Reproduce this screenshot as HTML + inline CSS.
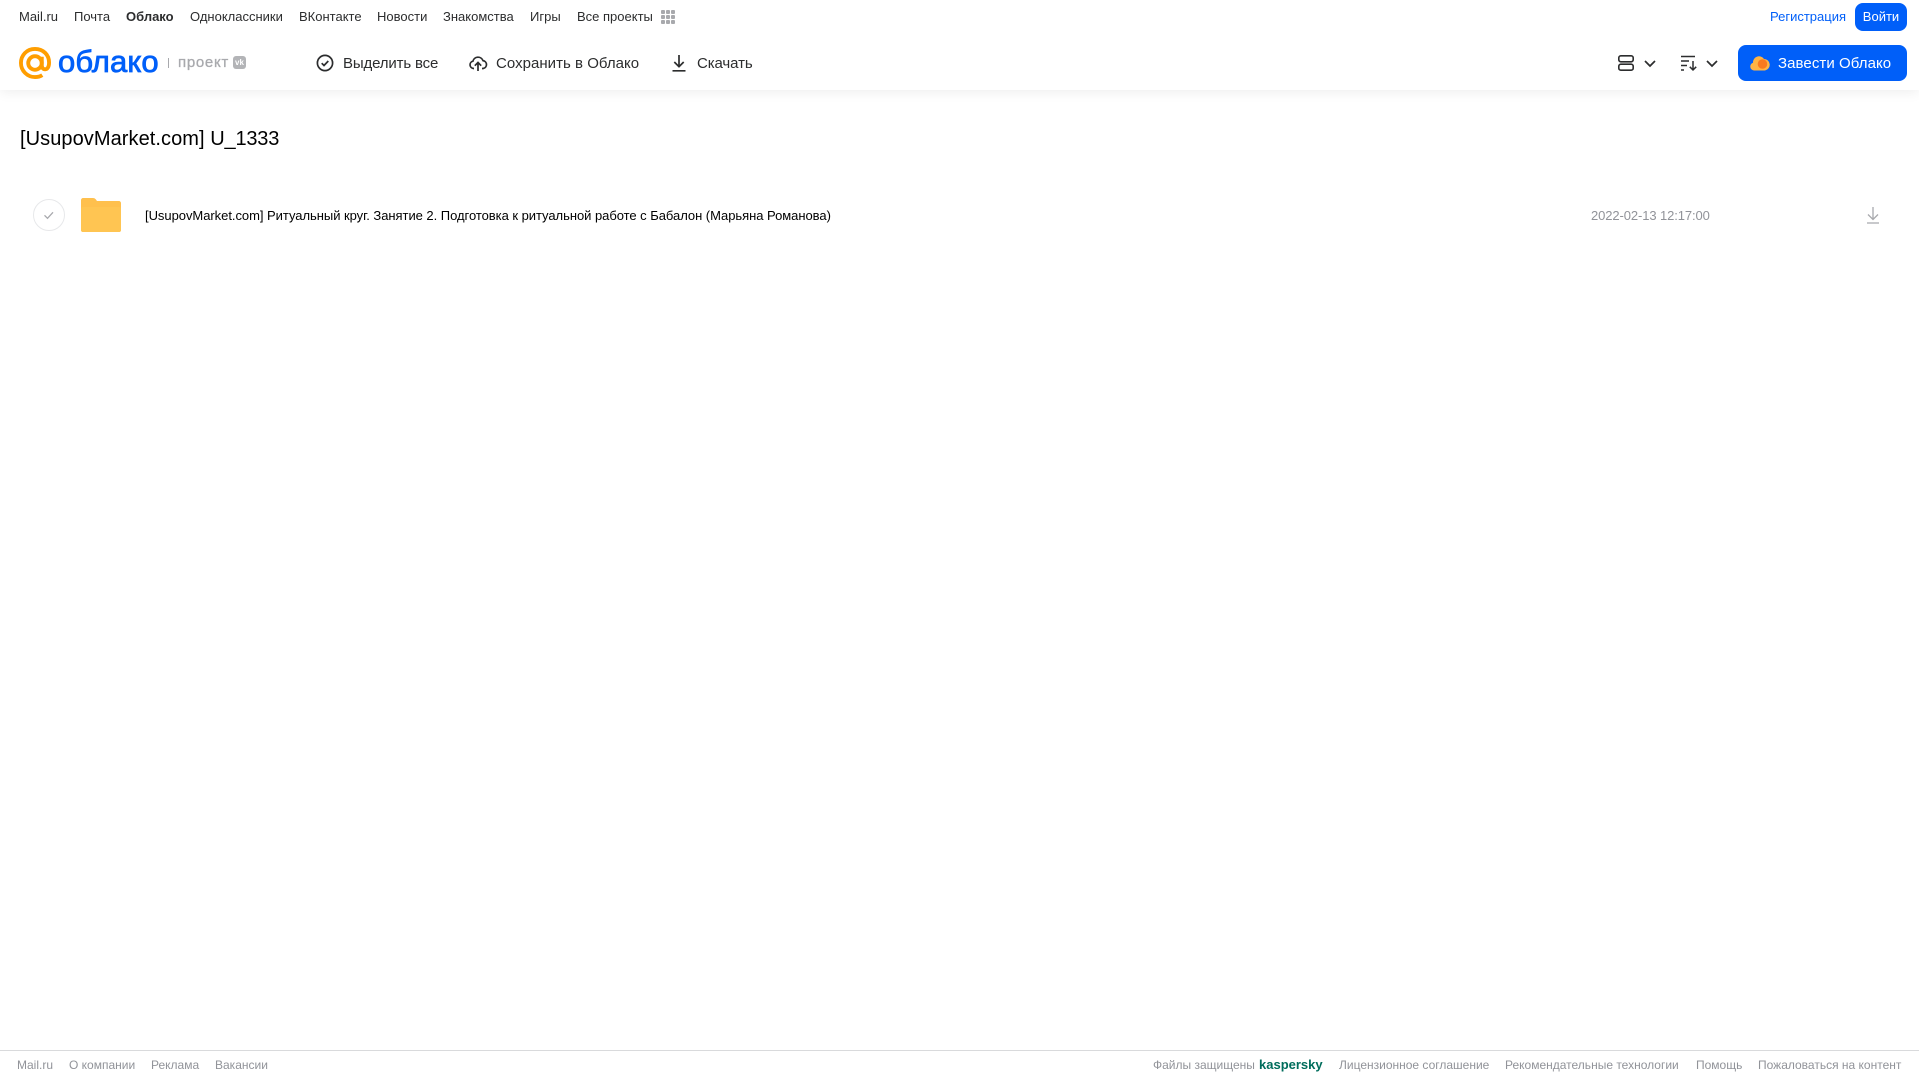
<!DOCTYPE html>
<html lang="ru"><head><meta charset="utf-8"><title>Облако</title>
<style>
html,body{margin:0;padding:0;background:#fff}
body{width:1919px;height:1079px;position:relative;overflow:hidden;font-family:"Liberation Sans",Arial,sans-serif}
.t{position:absolute;white-space:nowrap;line-height:20px;height:20px}
.n{top:7px;font-size:13px;color:#2c2d2e}
.b{top:53.500px;font-size:15px;color:#2c2d2e}
.f{top:1055px;font-size:12px;color:#919399}
svg{position:absolute;overflow:visible}
</style></head><body>
<div style="position:absolute;left:0;top:0;width:1919px;height:90px;background:#fff;box-shadow:0 2px 12px rgba(0,0,0,.07)"></div>

<span class="t n" style="left:19px">Mail.ru</span>
<span class="t n" style="left:74px">Почта</span>
<span class="t n" style="left:126px;font-weight:bold">Облако</span>
<span class="t n" style="left:190px">Одноклассники</span>
<span class="t n" style="left:299px">ВКонтакте</span>
<span class="t n" style="left:377px">Новости</span>
<span class="t n" style="left:443px">Знакомства</span>
<span class="t n" style="left:530px">Игры</span>
<span class="t n" style="left:577px">Все проекты</span>
<svg style="left:661px;top:10px" width="14" height="14" fill="#a8a9ad"><rect width="4" height="4" rx="1"/><rect x="5" width="4" height="4" rx="1"/><rect x="10" width="4" height="4" rx="1"/><rect y="5" width="4" height="4" rx="1"/><rect x="5" y="5" width="4" height="4" rx="1"/><rect x="10" y="5" width="4" height="4" rx="1"/><rect y="10" width="4" height="4" rx="1"/><rect x="5" y="10" width="4" height="4" rx="1"/><rect x="10" y="10" width="4" height="4" rx="1"/></svg>

<span class="t n" style="left:1770px;color:#005ff9">Регистрация</span>
<div style="position:absolute;left:1855px;top:3px;width:52px;height:28px;border-radius:8px;background:#005ff9;color:#fff;font-size:13px;line-height:27px;text-align:center">Войти</div>

<svg style="left:19px;top:47px" width="32" height="32" viewBox="0 0 33 33" fill="none" stroke="#ff9e00" stroke-width="4"><circle cx="16.500" cy="16.500" r="7"/><path d="M23.500 10v8.500c0 3 1.500 4.500 3.500 4.500s4-2 4-7C31 8 25 2 16.500 2S2 8.500 2 16.500 8.500 31 16.500 31c3 0 5.500-.7 7.500-2"/></svg>
<span class="t" style="left:58px;top:44px;height:36px;line-height:36px;font-size:31px;font-weight:normal;-webkit-text-stroke:.8px #005ff9;color:#005ff9;letter-spacing:.1px">облако</span>
<div style="position:absolute;left:168px;top:58px;width:1px;height:10px;background:#a8a9ad"></div>
<span class="t" style="left:178px;top:53px;font-size:15px;-webkit-text-stroke:.3px #a8a9ad;color:#a8a9ad;letter-spacing:.7px">проект</span>
<div style="position:absolute;left:233px;top:56px;width:13px;height:13px;border-radius:3px;background:#b3b4b7;color:#fff;font-size:8px;font-weight:bold;line-height:13px;text-align:center">vk</div>

<svg style="left:316px;top:54px" width="18" height="18" viewBox="0 0 18 18" fill="none" stroke="#2c2d2e" stroke-width="1.700"><circle cx="9" cy="9" r="7.600"/><path d="M5.700 9.200l2.300 2.300 4.300-4.500"/></svg>
<span class="t b" style="left:343px;letter-spacing:-.15px">Выделить все</span>
<svg style="left:469px;top:54px" width="18" height="18" viewBox="0 0 18 18" fill="none" stroke="#2c2d2e" stroke-width="1.700"><path d="M5 14.500H4.500a3.700 3.700 0 0 1-.6-7.300A5.300 5.300 0 0 1 14 6.600a4 4 0 0 1 .2 7.900H13"/><path d="M9 17V9M5.800 11.700L9 8.500l3.200 3.200"/></svg>
<span class="t b" style="left:496px;letter-spacing:.03px">Сохранить в Облако</span>
<svg style="left:670px;top:54px" width="18" height="18" viewBox="0 0 18 18" fill="none" stroke="#2c2d2e" stroke-width="1.700"><path d="M9 1v11.500M4.300 8L9 12.700 13.700 8M2.500 16.800h13"/></svg>
<span class="t b" style="left:697px;letter-spacing:-.1px">Скачать</span>

<svg style="left:1618px;top:55px" width="16" height="16" viewBox="0 0 16 16" fill="none" stroke="#2c2d2e" stroke-width="1.600"><rect x=".8" y=".8" width="14.400" height="6" rx="2"/><rect x=".8" y="9.200" width="14.400" height="6" rx="2"/></svg>
<svg style="left:1644px;top:60px" width="12" height="7" viewBox="0 0 12 7" fill="none" stroke="#2c2d2e" stroke-width="1.700"><path d="M1 1l5 5 5-5"/></svg>
<svg style="left:1681px;top:55px" width="17" height="16" viewBox="0 0 17 16" fill="none" stroke="#2c2d2e" stroke-width="1.500"><path d="M0 1.500h14M0 6h8M0 10.500h6M0 15h3M12 6v9M8.800 11.800L12 15l3.200-3.200"/></svg>
<svg style="left:1706px;top:60px" width="12" height="7" viewBox="0 0 12 7" fill="none" stroke="#2c2d2e" stroke-width="1.700"><path d="M1 1l5 5 5-5"/></svg>

<div style="position:absolute;left:1738px;top:45px;width:169px;height:36px;border-radius:8px;background:#005ff9"></div>
<svg style="left:1750px;top:54px" width="20" height="18" viewBox="0 0 20 18"><path d="M4 16.500A4 4 0 0 1 3 8.700 6 6 0 0 1 14 5a5.800 5.800 0 0 1 1 11.500z" fill="#ffb444"/><circle cx="12.500" cy="10" r="4.800" fill="#f97a1f"/></svg>
<span class="t b" style="left:1778px;color:#fff;letter-spacing:.07px">Завести Облако</span>

<span class="t" style="left:20px;top:127px;height:24px;line-height:24px;font-size:20px;color:#000"><span style="letter-spacing:.07px">[UsupovMarket.com] </span><span style="letter-spacing:-.2px">U_1333</span></span>

<svg style="left:33px;top:199px" width="32" height="32" viewBox="0 0 32 32" fill="none"><circle cx="16" cy="16" r="15.500" stroke="#e7e8ea"/><path d="M11.500 16.300l3 3 5.500-6" stroke="#a8a9ad" stroke-width="1.300"/></svg>
<svg style="left:81px;top:198px" width="40" height="34" viewBox="0 0 40 34"><path d="M2 0h10c2 0 3 1.500 4 3h22c1 0 2 1 2 2v27c0 1-1 2-2 2H2c-1 0-2-1-2-2V2c0-1 1-2 2-2z" fill="#ffc04d"/><rect y="9" width="40" height="25" rx="2" fill="#ffc552"/></svg>
<span class="t" style="left:145px;top:206px;font-size:13px;color:#000;letter-spacing:-.04px">[UsupovMarket.com] Ритуальный круг. Занятие 2. Подготовка к ритуальной работе с Бабалон (Марьяна Романова)</span>
<span class="t" style="left:1591px;top:206px;font-size:13px;color:#919399;letter-spacing:-.1px">2022-02-13 12:17:00</span>
<svg style="left:1866px;top:207px" width="14" height="17" viewBox="0 0 14 17" fill="none" stroke="#a8a9ad" stroke-width="1.300"><path d="M7 0v12M2 7.500L7 12.500 12 7.500M1 16h12"/></svg>

<div style="position:absolute;left:0;top:1050px;width:1919px;height:1px;background:#d9dadc"></div>
<span class="t f" style="left:17px">Mail.ru</span>
<span class="t f" style="left:69px">О компании</span>
<span class="t f" style="left:151px">Реклама</span>
<span class="t f" style="left:215px">Вакансии</span>
<span class="t f" style="left:1153px">Файлы защищены</span>
<span class="t f" style="left:1259px;font-size:13px;font-weight:bold;color:#006d5c">kaspersky</span>
<span class="t f" style="left:1339px">Лицензионное соглашение</span>
<span class="t f" style="left:1505px">Рекомендательные технологии</span>
<span class="t f" style="left:1696px">Помощь</span>
<span class="t f" style="left:1758px">Пожаловаться на контент</span>
</body></html>
